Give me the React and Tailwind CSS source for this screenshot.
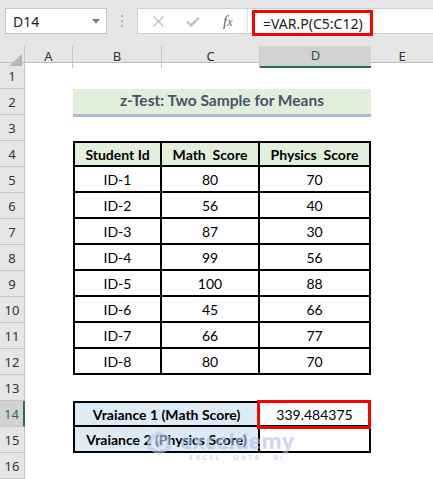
import React from "react";

const data = [
  ["ID-1", 80, 70],
  ["ID-2", 56, 40],
  ["ID-3", 87, 30],
  ["ID-4", 99, 56],
  ["ID-5", 100, 88],
  ["ID-6", 45, 66],
  ["ID-7", 66, 77],
  ["ID-8", 80, 70],
];

const cellFont = { fontFamily: "Lato, 'Liberation Sans', sans-serif" };
const uiFont = { fontFamily: "'Noto Sans', 'Open Sans', sans-serif" };

function RowHead({ n }) {
  if (n === 14) {
    return (
      <div className="flex items-end justify-center pb-[2px] bg-[#d2d2d2] border-r-2 border-r-[#217346] border-b border-b-[#c6c6c6] text-[13px] text-[#217346]" style={uiFont}>
        {n}
      </div>
    );
  }
  return (
    <div className="flex items-end justify-center pb-[2px] bg-[#e6e6e6] border-r border-b border-[#c6c6c6] text-[13px] text-[#333]" style={uiFont}>
      {n}
    </div>
  );
}

function Empty5() {
  return <div className="col-span-5" />;
}

function Row({ n }) {
  const head = <RowHead n={n} />;
  if (n === 2) {
    return (
      <>
        {head}
        <div />
        <div className="col-span-3 h-[28px] bg-[#e2efda] border-b-[3px] border-[#a7b9df] flex items-center justify-center pb-[1px] text-[15.5px] font-bold text-[#44546a]" style={cellFont}>
          z-Test: Two Sample for Means
        </div>
        <div />
      </>
    );
  }
  if (n === 4) {
    return (
      <>
        {head}
        <div />
        <div className="bg-[#e2efda] border-2 border-black flex items-center justify-center text-[14px] font-bold text-black" style={cellFont}>
          Student Id
        </div>
        <div className="bg-[#e2efda] border-y-2 border-r-2 border-black flex items-center justify-center text-[14px] font-bold text-black whitespace-pre" style={cellFont}>
          {"Math  Score"}
        </div>
        <div className="bg-[#e2efda] border-y-2 border-r-2 border-black flex items-center justify-center text-[14px] font-bold text-black whitespace-pre" style={cellFont}>
          {"Physics  Score"}
        </div>
        <div />
      </>
    );
  }
  if (n >= 5 && n <= 12) {
    const [id, m, p] = data[n - 5];
    return (
      <>
        {head}
        <div />
        <div className="border-x-2 border-b-2 border-black flex items-center justify-center text-[14px] text-black" style={cellFont}>
          {id}
        </div>
        <div className="border-r-2 border-b-2 border-black flex items-center justify-center text-[14px] text-black" style={cellFont}>
          {m}
        </div>
        <div className="border-r-2 border-b-2 border-black flex items-center justify-center text-[14px] text-black" style={cellFont}>
          {p}
        </div>
        <div />
      </>
    );
  }
  if (n === 14) {
    return (
      <>
        {head}
        <div />
        <div className="col-span-2 bg-[#ddebf7] border-2 border-black flex items-center justify-center text-[14px] font-bold text-black" style={cellFont}>
          Vraiance 1 (Math Score)
        </div>
        <div className="relative border-y-2 border-r-2 border-black flex items-center justify-center text-[14px] text-black" style={cellFont}>
          339.484375
          <div className="absolute left-[-3px] top-[-3px] w-[114px] h-[29px] border-[3px] border-[#ff0000]" />
        </div>
        <div />
      </>
    );
  }
  if (n === 15) {
    return (
      <>
        {head}
        <div />
        <div className="col-span-2 bg-[#ddebf7] border-x-2 border-b-2 border-black flex items-center justify-center text-[14px] font-bold text-black" style={cellFont}>
          Vraiance 2 (Physics Score)
        </div>
        <div className="border-r-2 border-b-2 border-black" />
        <div />
      </>
    );
  }
  return (
    <>
      {head}
      <Empty5 />
    </>
  );
}

function Watermark() {
  return (
    <div className="absolute left-[145px] top-[430px] flex items-start gap-[7px] opacity-60 pointer-events-none">
      <svg width="28" height="26" viewBox="0 0 28 26">
        <polygon points="14,1 26,7 26,19 14,25 2,19 2,7" fill="#b9c9ec" />
        <polygon points="14,6 21,10 21,17 14,21 7,17 7,10" fill="#dfe7f7" />
        <polygon points="14,9 18,11.5 18,15.5 14,18 10,15.5 10,11.5" fill="#b9c9ec" />
      </svg>
      <div className="flex flex-col items-center leading-none">
        <span className="text-[21px] font-bold text-[#aebfe6] tracking-[0.2px]" style={{ fontFamily: "'Open Sans', sans-serif", lineHeight: "22px" }}>
          exceldemy
        </span>
        <span className="text-[7px] font-bold text-[#b9c6e6] tracking-[2.2px] mt-[2px]" style={{ fontFamily: "'Open Sans', sans-serif" }}>
          EXCEL · DATA · BI
        </span>
      </div>
    </div>
  );
}

export default function App() {
  const rows = [];
  for (let i = 1; i <= 16; i++) rows.push(<Row key={i} n={i} />);
  return (
    <div className="relative w-[433px] h-[479px] overflow-hidden bg-white">
      {/* formula bar */}
      <div className="h-[46px] bg-[#e6e6e6] flex items-start pt-[8px] pl-[5px]">
        <div className="w-[102px] h-[26px] bg-white border border-[#c6c6c6] flex items-center justify-between pl-[7px] pr-[6px]">
          <span className="text-[14px] text-[#222]" style={uiFont}>D14</span>
          <svg width="8" height="5" viewBox="0 0 8 5">
            <polygon points="0,0 8,0 4,4.5" fill="#7a7a7a" />
          </svg>
        </div>
        <div className="w-[30px] h-[26px] flex flex-col items-center justify-center gap-[3px]">
          <div className="w-[2px] h-[2px] bg-[#b5b5b5]" />
          <div className="w-[2px] h-[2px] bg-[#b5b5b5]" />
          <div className="w-[2px] h-[2px] bg-[#b5b5b5]" />
        </div>
        <div className="relative flex-1 h-[26px] bg-white border-y border-l border-[#d0d0d0] flex items-center">
          <div className="w-[110px] flex items-center border-r border-[#e2e2e2] h-full">
            <svg className="ml-[15px]" width="11" height="11" viewBox="0 0 11 11">
              <path d="M0.5 0.5 L10.5 10.5 M10.5 0.5 L0.5 10.5" stroke="#bdbdbd" strokeWidth="1.3" />
            </svg>
            <svg className="ml-[22px]" width="14" height="11" viewBox="0 0 14 11">
              <path d="M1 5.5 L5 9.5 L13 1.5" stroke="#c2c2c2" strokeWidth="2.4" fill="none" />
            </svg>
            <span className="ml-[23px] text-[15px] italic text-[#666] leading-none" style={{ fontFamily: "'Liberation Serif', serif" }}>
              f<span className="text-[12px]">x</span>
            </span>
          </div>
          <div className="absolute left-[114px] top-[1px] w-[121px] h-[26px] border-[3px] border-[#ff0000] flex items-center pl-[8px]">
            <span className="text-[14px] text-[#222]" style={uiFont}>=VAR.P(C5:C12)</span>
          </div>
        </div>
      </div>
      {/* column headers */}
      <div className="grid grid-cols-[25px_48px_89px_98px_111px_62px] h-[17px] bg-[#e6e6e6] border-b border-[#bdbdbd] text-[13px] text-[#333]" style={uiFont}>
        <div className="relative border-r border-[#c6c6c6]">
          <svg className="absolute right-[2px] bottom-[2px]" width="13" height="12" viewBox="0 0 13 12">
            <polygon points="13,0 13,12 0,12" fill="#b8b8b8" />
          </svg>
        </div>
        <div className="flex items-center justify-center border-r border-[#c6c6c6]">A</div>
        <div className="flex items-center justify-center border-r border-[#c6c6c6]">B</div>
        <div className="flex items-center justify-center border-r border-[#c6c6c6]">C</div>
        <div className="flex items-center justify-center bg-[#d2d2d2] border-b-2 border-[#217346] text-[#1f5c3a]">D</div>
        <div className="flex items-center justify-center">E</div>
      </div>
      {/* grid */}
      <div className="grid grid-cols-[25px_48px_89px_98px_111px_62px] auto-rows-[26px]">
        {rows}
      </div>
      <Watermark />
    </div>
  );
}
